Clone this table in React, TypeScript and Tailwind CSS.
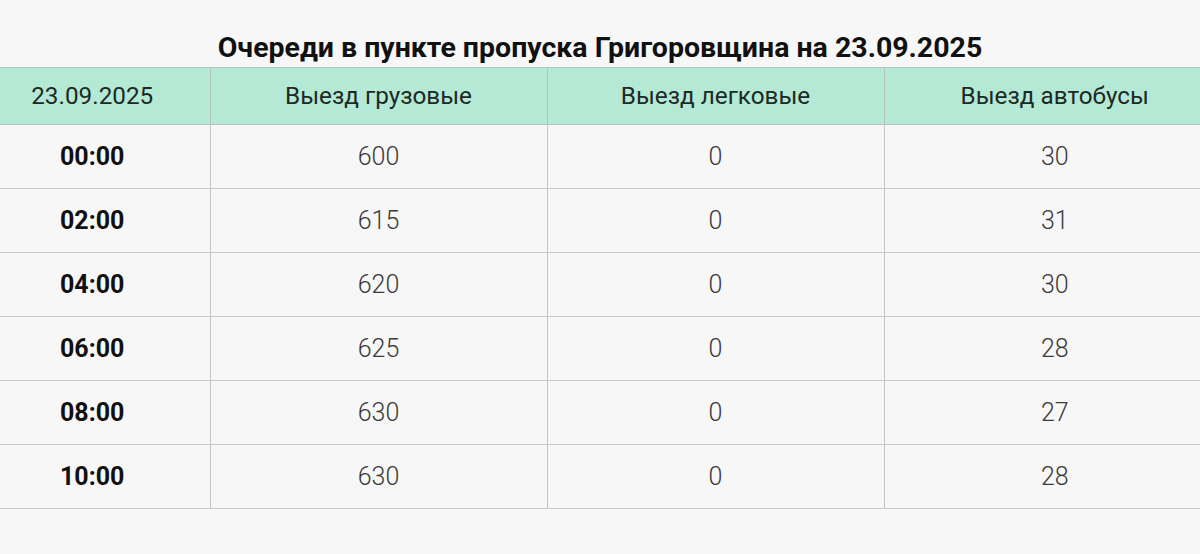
import React from 'react'

const rows = [
    { time: '00:00', trucks: 600, cars: 0, buses: 30 },
    { time: '02:00', trucks: 615, cars: 0, buses: 31 },
    { time: '04:00', trucks: 620, cars: 0, buses: 30 },
    { time: '06:00', trucks: 625, cars: 0, buses: 28 },
    { time: '08:00', trucks: 630, cars: 0, buses: 27 },
    { time: '10:00', trucks: 630, cars: 0, buses: 28 },
]

export default function App() {
    return (
        <div className="w-[1200px] h-[554px] bg-[#f7f7f7] overflow-hidden font-['Roboto',sans-serif]">
            <h1 className="pt-[33px] h-[67px] text-center text-[28.5px] leading-[30px] font-bold text-[#111]">
                Очереди в пункте пропуска Григоровщина на 23.09.2025
            </h1>

            {/* таблица шире окна, обрезается по краям */}
            <div className="flex justify-center">
                <table className="w-[1250px] shrink-0 border-collapse table-fixed">
                    <colgroup>
                        <col className="w-[235px]" />
                        <col className="w-[337px]" />
                        <col className="w-[337px]" />
                        <col className="w-[341px]" />
                    </colgroup>
                    <thead className="bg-[#b4e9d6] text-[#1c2a24]">
                        <tr className="h-[57px] border-t border-b border-[#b5c2bd]">
                            <th className="font-normal text-[24.3px] border-r border-[#b5c2bd]">23.09.2025</th>
                            <th className="font-normal text-[24.3px] border-r border-[#b5c2bd]">Выезд грузовые</th>
                            <th className="font-normal text-[24.3px] border-r border-[#b5c2bd]">Выезд легковые</th>
                            <th className="font-normal text-[24.3px]">Выезд автобусы</th>
                        </tr>
                    </thead>
                    <tbody>
                        {rows.map(row => (
                            <tr key={row.time} className="h-[64px] border-b border-[#c9c9c9]">
                                <td className="text-center text-[25px] font-bold text-[#111] border-r border-[#c4c4c4]">{row.time}</td>
                                <td className="text-center text-[25px] font-light text-[#3a3a3a] border-r border-[#c4c4c4]">{row.trucks}</td>
                                <td className="text-center text-[25px] font-light text-[#3a3a3a] border-r border-[#c4c4c4]">{row.cars}</td>
                                <td className="text-center text-[25px] font-light text-[#3a3a3a]">{row.buses}</td>
                            </tr>
                        ))}
                    </tbody>
                </table>
            </div>
        </div>
    )
}
